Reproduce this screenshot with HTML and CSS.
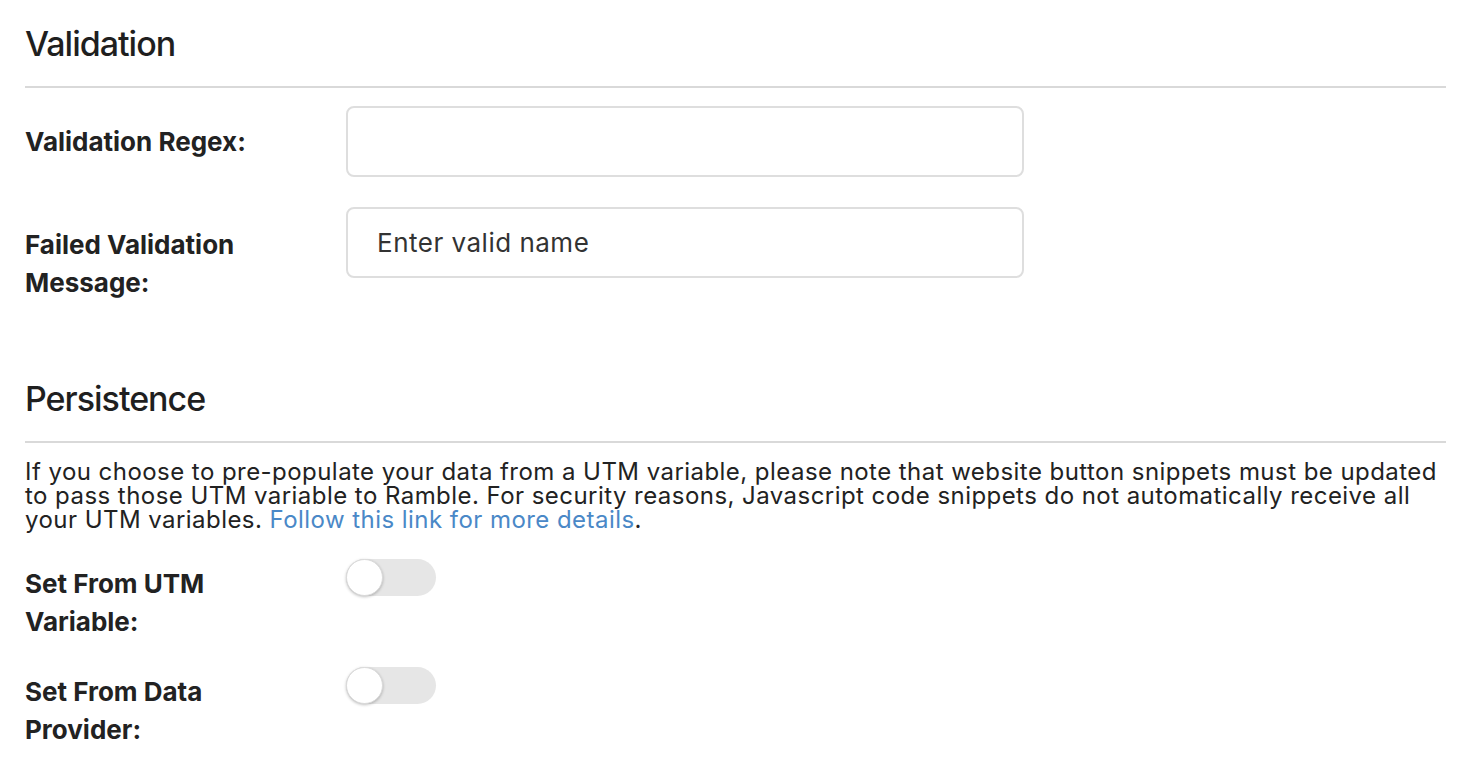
FILE: index.html
```html
<!DOCTYPE html>
<html lang="en">
<head>
<meta charset="utf-8">
<title>Validation & Persistence</title>
<link rel="stylesheet" href="styles.css">
</head>
<body>
<div class="page">
  <section class="section">
    <h2 class="section-title">Validation</h2>
    <hr class="divider">
    <div class="form-row">
      <label class="field-label" for="regex">Validation Regex:</label>
      <input class="text-input" id="regex" type="text" value="">
    </div>
    <div class="form-row">
      <label class="field-label" for="failmsg">Failed Validation Message:</label>
      <input class="text-input" id="failmsg" type="text" value="Enter valid name">
    </div>
  </section>

  <section class="section section-persist">
    <h2 class="section-title">Persistence</h2>
    <hr class="divider">
    <p class="note">If you choose to pre-populate your data from a UTM variable, please note that website button snippets must be updated to pass those UTM variable to Ramble. For security reasons, Javascript code snippets do not automatically receive all your UTM variables. <a class="link" href="#">Follow this link for more details</a>.</p>
    <div class="toggle-row">
      <span class="field-label toggle-label">Set From UTM Variable:</span>
      <span class="switch"><span class="knob"></span></span>
    </div>
    <div class="toggle-row">
      <span class="field-label toggle-label">Set From Data Provider:</span>
      <span class="switch"><span class="knob"></span></span>
    </div>
  </section>
</div>
</body>
</html>
```

FILE: styles.css
```css
* { box-sizing: border-box; }

html, body {
  margin: 0;
  padding: 0;
  background: #ffffff;
}

body {
  font-family: "Inter", "Roboto", "Liberation Sans", sans-serif;
  color: #222222;
}

.page {
  padding: 0 30px 0 25px;
}

.section-title {
  margin: 24px 0 0;
  font-size: 34px;
  line-height: 40px;
  font-weight: 500;
  letter-spacing: -1px;
  color: #1f1f1f;
}

.divider {
  margin: 22px 0 0;
  border: 0;
  border-top: 2px solid #d9d9d9;
  height: 0;
}

.form-row {
  display: grid;
  grid-template-columns: 321px 678px;
  align-items: start;
  margin-top: 18px;
}

.form-row + .form-row {
  margin-top: 30px;
}

.field-label {
  font-size: 26px;
  line-height: 38px;
  font-weight: 700;
  color: #222222;
  padding-top: 17px;
  letter-spacing: 0;
}

.form-row + .form-row .field-label {
  padding-top: 19px;
}

.text-input {
  display: block;
  width: 678px;
  height: 71px;
  margin: 0;
  border: 2px solid #dedede;
  border-radius: 8px;
  padding: 0 0 0 29px;
  font-family: inherit;
  font-size: 26px;
  color: #333333;
  background: #fff;
  outline: none;
  letter-spacing: 0.5px;
}

.section-persist .section-title {
  margin-top: 77px;
}

.note {
  margin: 17px 0 0;
  font-size: 24px;
  line-height: 24px;
  color: #222222;
  letter-spacing: 0.45px;
}

.link {
  color: #4a88c7;
  text-decoration: none;
}

.toggle-row {
  display: grid;
  grid-template-columns: 321px 90px;
  align-items: start;
  margin-top: 27px;
}

.toggle-row + .toggle-row {
  margin-top: 26px;
}

.toggle-label {
  padding-top: 6px;
  width: 200px;
}

.switch {
  position: relative;
  display: block;
  width: 90px;
  height: 37px;
  border-radius: 19px;
  background: #e6e6e6;
}

.knob {
  position: absolute;
  left: 0;
  top: 0;
  width: 37px;
  height: 37px;
  border-radius: 50%;
  background: #ffffff;
  border: 1px solid #dadada;
  box-shadow: 0 1px 3px rgba(0, 0, 0, 0.25);
}
```
